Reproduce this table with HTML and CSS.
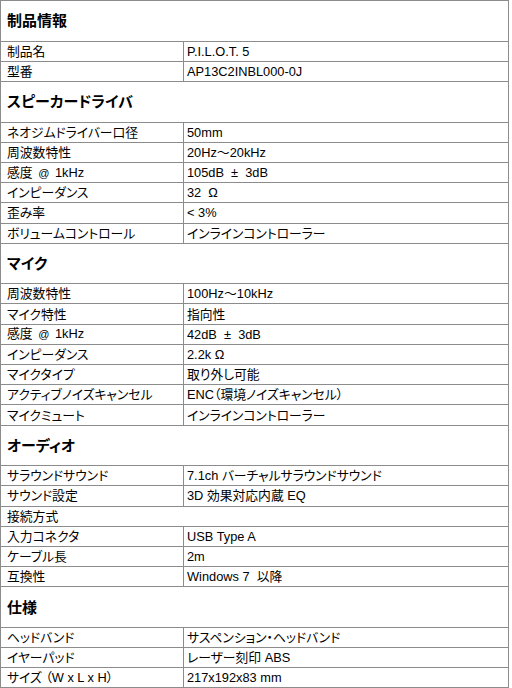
FILE: index.html
```html
<!DOCTYPE html>
<html lang="ja">
<head>
<meta charset="utf-8">
<title>製品仕様</title>
<link rel="stylesheet" href="styles.css">
</head>
<body>
<table class="spec">
  <colgroup><col class="c-key"><col class="c-val"></colgroup>
  <tbody>
    <tr class="sec"><th colspan="2">制品情報</th></tr>
    <tr><td class="k">制品名</td><td class="v">P.I.L.O.T. 5</td></tr>
    <tr><td class="k">型番</td><td class="v">AP13C2INBL000-0J</td></tr>

    <tr class="sec"><th colspan="2">スピーカードライバ</th></tr>
    <tr><td class="k">ネオジムドライバー口径</td><td class="v">50mm</td></tr>
    <tr><td class="k">周波数特性</td><td class="v">20Hz～20kHz</td></tr>
    <tr><td class="k">感度 <span class="at">@</span> 1kHz</td><td class="v">105dB&nbsp; ±&nbsp; 3dB</td></tr>
    <tr><td class="k">インピーダンス</td><td class="v">32&nbsp; Ω</td></tr>
    <tr><td class="k">歪み率</td><td class="v">&lt; 3%</td></tr>
    <tr><td class="k">ボリュームコントロール</td><td class="v">インラインコントローラー</td></tr>

    <tr class="sec"><th colspan="2">マイク</th></tr>
    <tr><td class="k">周波数特性</td><td class="v">100Hz～10kHz</td></tr>
    <tr><td class="k">マイク特性</td><td class="v">指向性</td></tr>
    <tr><td class="k">感度 <span class="at">@</span> 1kHz</td><td class="v">42dB&nbsp; ±&nbsp; 3dB</td></tr>
    <tr><td class="k">インピーダンス</td><td class="v">2.2k Ω</td></tr>
    <tr><td class="k">マイクタイプ</td><td class="v">取り外し可能</td></tr>
    <tr><td class="k">アクティブノイズキャンセル</td><td class="v">ENC（環境ノイズキャンセル）</td></tr>
    <tr><td class="k">マイクミュート</td><td class="v">インラインコントローラー</td></tr>

    <tr class="sec"><th colspan="2">オーディオ</th></tr>
    <tr><td class="k">サラウンドサウンド</td><td class="v">7.1ch バーチャルサラウンドサウンド</td></tr>
    <tr><td class="k">サウンド設定</td><td class="v">3D 効果対応内蔵 EQ</td></tr>
    <tr><td class="k" colspan="2">接続方式</td></tr>
    <tr><td class="k">入力コネクタ</td><td class="v">USB Type A</td></tr>
    <tr><td class="k">ケーブル長</td><td class="v">2m</td></tr>
    <tr><td class="k">互換性</td><td class="v">Windows 7&nbsp; 以降</td></tr>

    <tr class="sec"><th colspan="2">仕様</th></tr>
    <tr><td class="k">ヘッドバンド</td><td class="v">サスペンション・ヘッドバンド</td></tr>
    <tr><td class="k">イヤーパッド</td><td class="v">レーザー刻印 ABS</td></tr>
    <tr><td class="k">サイズ （W x L x H）</td><td class="v">217x192x83 mm</td></tr>
  </tbody>
</table>
</body>
</html>
```
FILE: styles.css
```css
html, body {
  margin: 0;
  padding: 0;
  background: #ffffff;
}

.spec {
  width: 509px;
  table-layout: fixed;
  border-collapse: collapse;
  font-family: "Liberation Sans", "Noto Sans CJK JP", sans-serif;
  font-feature-settings: "palt";
  color: #000;
  font-size: 12.8px;
}

.c-key { width: 183px; }

.spec th,
.spec td {
  border: 1px solid #8c8c8c;
  padding: 0;
  vertical-align: middle;
  white-space: nowrap;
  overflow: hidden;
  line-height: 15px;
}

.spec tr { height: 20.2px; }
.spec tr.sec { height: 40.6px; }

.spec th {
  text-align: left;
  font-size: 15px;
  font-weight: bold;
  padding-left: 6px;
}

.spec td.k { padding-left: 6px; }
.spec td.v { padding-left: 3px; }

.at { font-size: 11px; margin: 0 2px; }
```
